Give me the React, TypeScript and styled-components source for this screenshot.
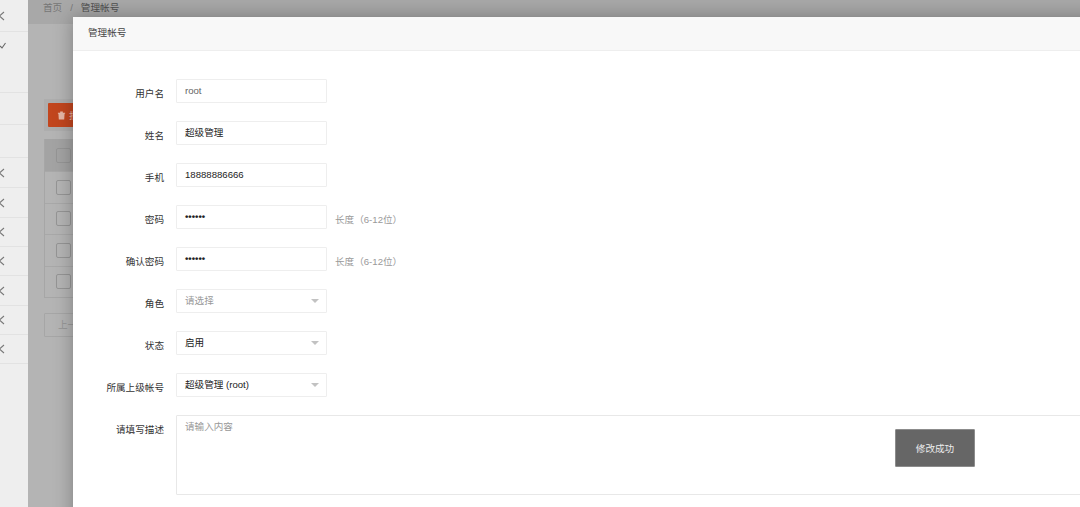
import React from "react";
import styled, { createGlobalStyle } from "styled-components";

const GlobalStyle = createGlobalStyle`
  html, body {
    margin: 0;
    padding: 0;
    background: #b4b4b4;
  }
  * {
    box-sizing: border-box;
  }
`;

const fontStack = `"Liberation Sans", "Noto Sans CJK SC", sans-serif`;

type SideItem = { height: number; mark?: "open" | "check" | "none" };

const sideItems: SideItem[] = [
  { height: 32, mark: "open" },
  { height: 61, mark: "check" },
  { height: 32, mark: "none" },
  { height: 33, mark: "none" },
  { height: 30, mark: "open" },
  { height: 30, mark: "open" },
  { height: 29, mark: "open" },
  { height: 29, mark: "open" },
  { height: 30, mark: "open" },
  { height: 29, mark: "open" },
  { height: 29, mark: "open" },
];

const App: React.FC = () => {
  return (
    <Page>
      <GlobalStyle />
      <Sidebar>
        {sideItems.map((item, i) => (
          <SideRow key={i} $height={item.height}>
            {item.mark === "open" && (
              <svg width="8" height="10" viewBox="0 0 8 10">
                <path d="M6 1 L1.5 5 L6 9" fill="none" stroke="#777" strokeWidth="1.1" />
              </svg>
            )}
            {item.mark === "check" && (
              <CheckMark width="8" height="8" viewBox="0 0 8 8">
                <path d="M2 5 L4 7 L7.5 2" fill="none" stroke="#666" strokeWidth="1.1" />
              </CheckMark>
            )}
          </SideRow>
        ))}
      </Sidebar>

      <Main>
        <Breadcrumb>
          <Crumb>首页</Crumb>
          <CrumbSep>/</CrumbSep>
          <Crumb $current>管理帐号</Crumb>
        </Breadcrumb>
        <Toolbar>
          <DangerButton>
            <svg width="9" height="9" viewBox="0 0 10 10">
              <path d="M1 2 H9 V3 H8.4 L8 9.5 H2 L1.6 3 H1 Z M3.5 0.6 H6.5 V2 H3.5 Z" fill="#e6b7a6" />
            </svg>
            批量删除
          </DangerButton>
        </Toolbar>
        <Table>
          <HeadRow>
            <FakeCheck />
          </HeadRow>
          <BodyRow>
            <FakeCheck />
          </BodyRow>
          <BodyRow>
            <FakeCheck />
          </BodyRow>
          <BodyRow>
            <FakeCheck />
          </BodyRow>
          <BodyRow>
            <FakeCheck />
          </BodyRow>
        </Table>
        <PagerButton>上一页</PagerButton>
      </Main>

      <Modal>
        <ModalTitle>管理帐号</ModalTitle>
        <Form>
          <FormRow>
            <Label>用户名</Label>
            <Field $tone="muted">root</Field>
          </FormRow>
          <FormRow>
            <Label>姓名</Label>
            <Field>超级管理</Field>
          </FormRow>
          <FormRow>
            <Label>手机</Label>
            <Field>18888886666</Field>
          </FormRow>
          <FormRow>
            <Label>密码</Label>
            <Field $tone="secret">••••••</Field>
            <Hint>长度（6-12位）</Hint>
          </FormRow>
          <FormRow>
            <Label>确认密码</Label>
            <Field $tone="secret">••••••</Field>
            <Hint>长度（6-12位）</Hint>
          </FormRow>
          <FormRow>
            <Label>角色</Label>
            <Field $tone="placeholder">
              请选择
              <Caret />
            </Field>
          </FormRow>
          <FormRow>
            <Label>状态</Label>
            <Field>
              启用
              <Caret />
            </Field>
          </FormRow>
          <FormRow>
            <Label>所属上级帐号</Label>
            <Field>
              超级管理 (root)
              <Caret />
            </Field>
          </FormRow>
          <FormRow>
            <Label>请填写描述</Label>
            <TextArea>请输入内容</TextArea>
          </FormRow>
        </Form>
      </Modal>

      <Toast>修改成功</Toast>
    </Page>
  );
};

const Page = styled.div`
  position: relative;
  display: flex;
  width: 1080px;
  height: 507px;
  overflow: hidden;
  background: #b4b4b4;
  font-family: ${fontStack};
`;

const Sidebar = styled.div`
  width: 28px;
  flex: none;
  background: #eeeeee;
  display: flex;
  flex-direction: column;
`;

const SideRow = styled.div<{ $height: number }>`
  height: ${(p) => p.$height}px;
  border-bottom: 1px solid #e2e2e2;
  display: flex;
  align-items: center;
  margin-left: -2px;
`;

const CheckMark = styled.svg`
  align-self: flex-start;
  margin-top: 9px;
`;

const Main = styled.div`
  flex: 1;
  padding-left: 16px;
  display: flex;
  flex-direction: column;
  align-items: flex-start;
`;

const Breadcrumb = styled.div`
  height: 24px;
  margin-left: -16px;
  padding-left: 15px;
  width: 1052px;
  display: flex;
  align-items: flex-start;
  padding-top: 1px;
  gap: 8px;
  background: #a8a8a8;
  font-size: 9.6px;
  line-height: 14px;
`;

const Crumb = styled.span<{ $current?: boolean }>`
  color: ${(p) => (p.$current ? "#4f4f4f" : "#767676")};
`;

const CrumbSep = styled.span`
  color: #777777;
`;

const Toolbar = styled.div`
  margin-top: 75px;
  height: 32px;
  padding: 4px;
  width: 40px;
  background: #adadad;
`;

const DangerButton = styled.div`
  width: 80px;
  height: 24px;
  background: #c2461e;
  border-radius: 1px;
  color: #e6b7a6;
  font-size: 9.6px;
  display: flex;
  align-items: center;
  gap: 3px;
  padding-left: 9px;
  white-space: nowrap;
`;

const Table = styled.div`
  margin-top: 8px;
  width: 200px;
  border: 1px solid #a6a6a6;
  border-width: 0 0 1px 1px;
`;

const HeadRow = styled.div`
  height: 32px;
  background: #a3a3a3;
  display: flex;
  align-items: center;
  padding-left: 11px;
`;

const BodyRow = styled.div`
  height: 31.5px;
  border-top: 1px solid #a8a8a8;
  display: flex;
  align-items: center;
  padding-left: 11px;
`;

const FakeCheck = styled.div`
  width: 15px;
  height: 15px;
  border: 1px solid #959595;
  border-radius: 2px;
`;

const PagerButton = styled.div`
  margin-top: 15px;
  width: 80px;
  height: 24px;
  border: 1px solid #a6a6a6;
  border-radius: 1px;
  padding-left: 13px;
  color: #959595;
  font-size: 9.6px;
  line-height: 22px;
`;

const Modal = styled.div`
  position: absolute;
  left: 73px;
  top: 17px;
  width: 1100px;
  height: 520px;
  background: #ffffff;
  box-shadow: 0 0 18px rgba(0, 0, 0, 0.3);
`;

const ModalTitle = styled.div`
  height: 34px;
  padding-left: 15px;
  background: #f8f8f8;
  border-bottom: 1px solid #eeeeee;
  color: #444444;
  font-size: 9.6px;
  line-height: 32px;
`;

const Form = styled.div`
  padding-top: 28px;
  display: flex;
  flex-direction: column;
  gap: 18px;
`;

const FormRow = styled.div`
  display: flex;
  align-items: flex-start;
`;

const Label = styled.div`
  width: 91px;
  flex: none;
  padding-top: 8px;
  text-align: right;
  color: #333333;
  font-size: 9.6px;
  line-height: 14px;
`;

const Field = styled.div<{ $tone?: "muted" | "placeholder" | "secret" }>`
  position: relative;
  margin-left: 12px;
  width: 151px;
  height: 24px;
  flex: none;
  border: 1px solid #eeeeee;
  border-radius: 1px;
  padding-left: 8px;
  font-size: 9.6px;
  font-weight: ${(p) => (p.$tone === "secret" ? 700 : 400)};
  line-height: 22px;
  color: ${(p) =>
    p.$tone === "muted" ? "#666666" : p.$tone === "placeholder" ? "#999999" : "#222222"};
`;

const Caret = styled.span`
  position: absolute;
  right: 7px;
  top: 9px;
  border-style: solid;
  border-width: 4.5px 4.5px 0 4.5px;
  border-color: #c2c2c2 transparent transparent transparent;
`;

const Hint = styled.div`
  margin-left: 8px;
  padding-top: 8px;
  color: #999999;
  font-size: 9.6px;
  line-height: 14px;
`;

const TextArea = styled.div`
  margin-left: 12px;
  width: 1000px;
  height: 80px;
  flex: none;
  border: 1px solid #e8e8e8;
  border-radius: 1px;
  padding: 4px 8px;
  color: #999999;
  font-size: 9.6px;
  line-height: 14px;
`;

const Toast = styled.div`
  position: absolute;
  left: 895px;
  top: 429px;
  width: 80px;
  height: 38px;
  background: #666666;
  border: 1px solid #8c8c8c;
  border-radius: 1px;
  color: #eeeeee;
  font-size: 9.6px;
  display: flex;
  align-items: center;
  justify-content: center;
`;

export default App;
